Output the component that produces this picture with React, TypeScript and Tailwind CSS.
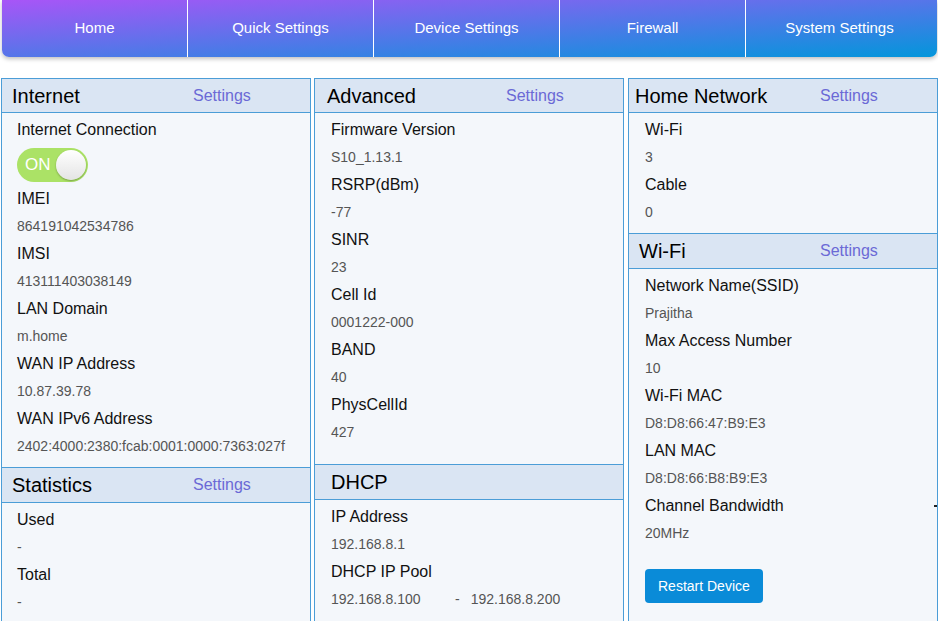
import React from "react";

const navItems = [
  "Home",
  "Quick Settings",
  "Device Settings",
  "Firewall",
  "System Settings",
];

interface RowProps {
  label: string;
  value: React.ReactNode;
  mark?: boolean;
}

function Row({ label, value, mark }: RowProps) {
  return (
    <div>
      <div className="flex items-center justify-between text-[16px] leading-[28px] text-[#111]">
        <span>{label}</span>
        {mark && <span className="w-[3px] h-[2px] bg-[#222]" />}
      </div>
      <div className="text-[14px] leading-[27px] text-[#555]">{value}</div>
    </div>
  );
}

interface HeaderProps {
  title: string;
  pad: string;
  settings?: boolean;
  tall?: boolean;
}

function PanelHeader({ title, pad, settings = true, tall }: HeaderProps) {
  return (
    <div
      className={`flex items-center border-y border-[#4b9dd7] bg-[#dae5f3] ${
        tall ? "h-[36px]" : "h-[35px]"
      }`}
    >
      <div className={`w-[191px] text-[20px] text-black ${pad}`}>{title}</div>
      {settings && <div className="text-[16px] text-[#6b69d6]">Settings</div>}
    </div>
  );
}

function Toggle() {
  return (
    <div className="mt-[4px] mb-[3px] flex h-[34px] w-[71px] items-center justify-between rounded-full bg-[#abe266] pl-[8px] pr-[2px]">
      <span className="text-[17px] text-white">ON</span>
      <span className="h-[30px] w-[30px] rounded-full bg-[linear-gradient(to_bottom,#ffffff,#e4e4e4)] shadow-[0_1px_2px_rgba(0,0,0,0.3)]" />
    </div>
  );
}

export default function App() {
  return (
    <div className="min-h-screen bg-white font-['Liberation_Sans',Arial,sans-serif]">
      <nav className="ml-[2px] mr-[1px] flex h-[57px] rounded-b-[7px] bg-[linear-gradient(to_bottom_right,#a855f7,#0396db)] shadow-[0_2px_4px_rgba(0,0,0,0.25)]">
        {navItems.map((item, i) => (
          <div
            key={item}
            className={`flex items-center justify-center text-[15px] text-white ${
              i < navItems.length - 1
                ? "w-[186px] border-r border-white"
                : "flex-1 pr-[4px]"
            }`}
          >
            {item}
          </div>
        ))}
      </nav>

      <div className="mt-[21px] flex items-start">
        {/* column 1 */}
        <div className="ml-[1px] w-[310px] border-x border-[#4b9dd7] bg-[#f4f7fb]">
          <PanelHeader title="Internet" pad="pl-[10px]" />
          <div className="pl-[15px] pt-[3px] pb-[7px]">
            <div className="text-[16px] leading-[28px] text-[#111]">
              Internet Connection
            </div>
            <Toggle />
            <Row label="IMEI" value="864191042534786" />
            <Row label="IMSI" value="413111403038149" />
            <Row label="LAN Domain" value="m.home" />
            <Row label="WAN IP Address" value="10.87.39.78" />
            <Row
              label="WAN IPv6 Address"
              value="2402:4000:2380:fcab:0001:0000:7363:027f"
            />
          </div>
          <PanelHeader title="Statistics" pad="pl-[10px]" tall />
          <div className="pl-[15px] pt-[3px] pb-[20px]">
            <Row label="Used" value="-" />
            <Row label="Total" value="-" />
          </div>
        </div>

        {/* column 2 */}
        <div className="ml-[3px] w-[310px] border-x border-[#4b9dd7] bg-[#f4f7fb]">
          <PanelHeader title="Advanced" pad="pl-[12px]" />
          <div className="pl-[16px] pt-[3px] pb-[18px]">
            <Row label="Firmware Version" value="S10_1.13.1" />
            <Row label="RSRP(dBm)" value="-77" />
            <Row label="SINR" value="23" />
            <Row label="Cell Id" value="0001222-000" />
            <Row label="BAND" value="40" />
            <Row label="PhysCellId" value="427" />
          </div>
          <PanelHeader title="DHCP" pad="pl-[16px]" settings={false} tall />
          <div className="pl-[16px] pt-[3px] pb-[20px]">
            <Row label="IP Address" value="192.168.8.1" />
            <Row
              label="DHCP IP Pool"
              value={
                <span>
                  <span className="inline-block w-[124px]">192.168.8.100</span>
                  <span>-</span>
                  <span className="ml-[11px]">192.168.8.200</span>
                </span>
              }
            />
          </div>
        </div>

        {/* column 3 */}
        <div className="ml-[4px] w-[310px] border-x border-[#4b9dd7] bg-[#f4f7fb]">
          <PanelHeader title="Home Network" pad="pl-[6px]" />
          <div className="pl-[16px] pt-[3px] pb-[7px]">
            <Row label="Wi-Fi" value="3" />
            <Row label="Cable" value="0" />
          </div>
          <PanelHeader title="Wi-Fi" pad="pl-[10px]" tall />
          <div className="pl-[16px] pt-[3px] pb-[30px]">
            <Row label="Network Name(SSID)" value="Prajitha" />
            <Row label="Max Access Number" value="10" />
            <Row label="Wi-Fi MAC" value="D8:D8:66:47:B9:E3" />
            <Row label="LAN MAC" value="D8:D8:66:B8:B9:E3" />
            <Row label="Channel Bandwidth" value="20MHz" mark />
            <button className="mt-[22px] h-[34px] rounded-[4px] bg-[#0a8bd8] px-[13px] text-[14px] text-white">
              Restart Device
            </button>
          </div>
        </div>
      </div>
    </div>
  );
}
